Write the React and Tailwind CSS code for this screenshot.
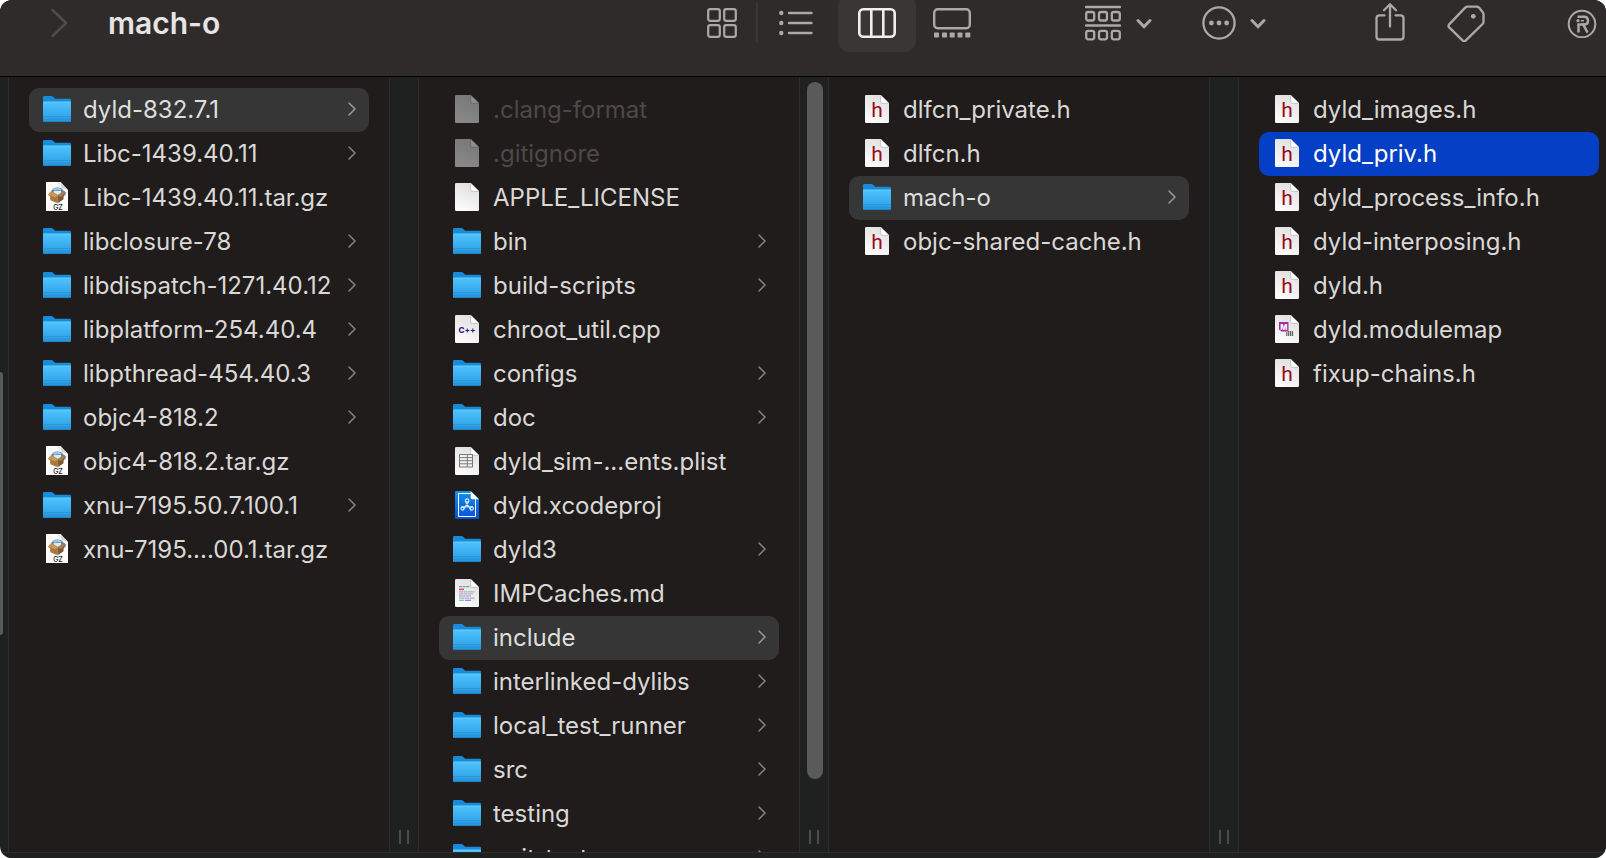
import React from "react";

const FolderIcon = () => (
  <svg width="28" height="32" viewBox="0 0 28 32" className="shrink-0" aria-hidden="true">
    <defs>
      <linearGradient id="folderFront" x1="0" y1="0" x2="0" y2="1">
        <stop offset="0" stopColor="#5fd0fe" />
        <stop offset="0.1" stopColor="#4cbffa" />
        <stop offset="0.7" stopColor="#35a8ec" />
        <stop offset="1" stopColor="#2893d8" />
      </linearGradient>
    </defs>
    <path d="M0 3.2Q0 2 1.2 2H8.4Q9.2 2 9.8 2.5L11.6 4.2Q12.2 4.8 13.2 4.8H26.8Q28 4.8 28 6V12H0Z" fill="#1b8ad8" />
    <path d="M0 8.3Q0 7.6.8 7.6H27.2Q28 7.6 28 8.3V26.8Q28 28 26.8 28H1.2Q0 28 0 26.8Z" fill="url(#folderFront)" />
    <path d="M0 22.5H28M0 25.2H28" stroke="#2389cf" strokeWidth="0.6" />
    <path d="M0.4 27.6H27.6" stroke="#1a79bd" strokeWidth="0.8" />
  </svg>
);

const Page = ({ children, dim }) => (
  <svg width="28" height="32" viewBox="0 0 28 32" className="shrink-0" aria-hidden="true">
    <defs>
      <linearGradient id="pagePaper" x1="0.4" y1="1" x2="0.8" y2="0">
        <stop offset="0" stopColor="#fbfbfb" />
        <stop offset="1" stopColor="#dedede" />
      </linearGradient>
      <linearGradient id="pageDim" x1="0.4" y1="1" x2="0.8" y2="0">
        <stop offset="0" stopColor="#8a8989" />
        <stop offset="1" stopColor="#777676" />
      </linearGradient>
    </defs>
    <path d="M2 2.2Q2 1 3.2 1H17.7L26 9.3V27.8Q26 29 24.8 29H3.2Q2 29 2 27.8Z" fill={dim ? "url(#pageDim)" : "url(#pagePaper)"} />
    <path d="M17.7 1V8Q17.7 9.3 19 9.3H26Z" fill={dim ? "#8f8e8e" : "#ffffff"} />
    <path d="M17.7 1.5V8Q17.7 9.3 19 9.3H25.7" fill="none" stroke={dim ? "#5f5e5e" : "#b5b5b5"} strokeWidth="0.7" />
    {children}
  </svg>
);

const HeaderFileIcon = () => (
  <Page>
    <text x="14" y="23" textAnchor="middle" fontSize="21" fontFamily="Roboto, sans-serif" fill="#980b20">h</text>
  </Page>
);

const CppIcon = () => (
  <Page>
    <text x="14" y="18.5" textAnchor="middle" fontSize="8" fontWeight="800" fontFamily="Inter, sans-serif" fill="#3c1b7c">C++</text>
  </Page>
);

const PlistIcon = () => (
  <Page>
    <rect x="6.5" y="8.5" width="13" height="12.5" fill="#f2f2f2" stroke="#7a7a7a" strokeWidth="1" />
    <path d="M6.5 11.6H19.5M6.5 14.7H19.5M6.5 17.8H19.5M14.3 8.5V21" stroke="#7a7a7a" strokeWidth="1" />
  </Page>
);

const MarkdownIcon = () => (
  <Page>
    <path d="M6 8.7H17" stroke="#5cab9c" strokeWidth="1.3" strokeDasharray="3 0.6" />
    <path d="M6 11.4H11" stroke="#e0407f" strokeWidth="1.5" />
    <path d="M6 13.8H21.5M6 15.8H20" stroke="#a9b0b8" strokeWidth="1.2" strokeDasharray="4 0.4" />
    <path d="M6 18H18" stroke="#9b7fe0" strokeWidth="1.2" strokeDasharray="3 0.4" />
    <path d="M6 20.1H21.5" stroke="#a9b0b8" strokeWidth="1.1" strokeDasharray="5 0.4" />
    <path d="M6 22.3H11" stroke="#7fc4b8" strokeWidth="1.2" />
    <path d="M12 22.3H18" stroke="#7b83e6" strokeWidth="1.2" />
  </Page>
);

const XcodeIcon = () => (
  <svg width="28" height="32" viewBox="0 0 28 32" className="shrink-0" aria-hidden="true">
    <defs>
      <linearGradient id="xcodeBlue" x1="0" y1="0" x2="0" y2="1">
        <stop offset="0" stopColor="#1591e8" />
        <stop offset="1" stopColor="#0a4fdc" />
      </linearGradient>
    </defs>
    <path d="M2 2.2Q2 1 3.2 1H17.7L26 9.3V27.8Q26 29 24.8 29H3.2Q2 29 2 27.8Z" fill="url(#xcodeBlue)" />
    <path d="M18 3.5H5.5V26.5H22.5V9" fill="none" stroke="#fff" strokeWidth="1" />
    <path d="M17.7 1V8Q17.7 9.3 19 9.3H26Z" fill="#f4f7fb" />
    <g fill="none" stroke="#d9edff" strokeWidth="1.1" strokeLinecap="round">
      <path d="M12.4 11.4L18 20.2M15.8 11.4L10.4 19.8M8.6 16.8H19.6" />
      <circle cx="14.1" cy="10.6" r="1.7" />
      <circle cx="9.4" cy="18.6" r="1.5" />
      <circle cx="18.8" cy="18.6" r="1.5" />
    </g>
  </svg>
);

const ModuleIcon = () => (
  <Page>
    <path d="M6 8H15.5V17.5H8.5L6 15.5Z" fill="#a62ba6" />
    <text x="10.8" y="15.5" textAnchor="middle" fontSize="7.5" fontWeight="800" fontFamily="Inter, sans-serif" fill="#fff">M</text>
    <path d="M13.8 18V22M15.7 17V22M17.6 17V22M19.5 17V22" stroke="#5e5e5e" strokeWidth="1.2" />
  </Page>
);

const GzIcon = () => (
  <svg width="28" height="32" viewBox="0 0 28 32" className="shrink-0" aria-hidden="true">
    <path d="M3 0H17.5L25 8V29H3Z" fill="#fdfdfd" />
    <path d="M17.5 0C18.6 3 18.6 4.6 18 6.6C20.5 6.2 23 6.7 25 8Z" fill="#d2d2d2" />
    <path d="M14 0.5H17.5L18 6.6L15.5 4Z" fill="#ececec" />
    <path d="M8.3 9.2Q9.6 5.6 14 5.4Q18.6 5.4 20.4 8.6L19.6 12.5H9.6Z" fill="#4d83ad" />
    <path d="M9.8 7.2Q13.8 4.8 18.6 7.2L17.4 8.4Q13.8 7 10.8 8.6Z" fill="#a9cde4" />
    <path d="M10.6 8.8H18.2L17.8 12.4H11.4Z" fill="#dfe7ec" />
    <path d="M5 12.8L8.2 9L12.2 11.4L15 13.2L14.6 21.2L7.4 18.2L7 14.6Z" fill="#a9783e" />
    <path d="M15 13.2L20.6 10L22.8 12.2L20.8 14L20.4 17.6L14.6 21.2Z" fill="#86592b" />
    <path d="M5 12.8L8.2 9L15 13.2L12.2 15.6Z" fill="#c6985a" />
    <path d="M15 13.2L20.8 8.6L23.4 10.8L17.2 15.2Z" fill="#9a8161" />
    <text x="15" y="28" textAnchor="middle" fontSize="7" fontWeight="500" fontFamily="Inter, sans-serif" fill="#222">GZ</text>
  </svg>
);

const icons = {
  folder: FolderIcon,
  file: () => <Page />,
  hidden: () => <Page dim />,
  h: HeaderFileIcon,
  cpp: CppIcon,
  plist: PlistIcon,
  md: MarkdownIcon,
  xcode: XcodeIcon,
  module: ModuleIcon,
  gz: GzIcon,
};

const columns = [
  [
    ["dyld-832.7.1", "folder", "open"],
    ["Libc-1439.40.11", "folder"],
    ["Libc-1439.40.11.tar.gz", "gz"],
    ["libclosure-78", "folder"],
    ["libdispatch-1271.40.12", "folder"],
    ["libplatform-254.40.4", "folder"],
    ["libpthread-454.40.3", "folder"],
    ["objc4-818.2", "folder"],
    ["objc4-818.2.tar.gz", "gz"],
    ["xnu-7195.50.7.100.1", "folder"],
    ["xnu-7195....00.1.tar.gz", "gz"],
  ],
  [
    [".clang-format", "hidden"],
    [".gitignore", "hidden"],
    ["APPLE_LICENSE", "file"],
    ["bin", "folder"],
    ["build-scripts", "folder"],
    ["chroot_util.cpp", "cpp"],
    ["configs", "folder"],
    ["doc", "folder"],
    ["dyld_sim-...ents.plist", "plist"],
    ["dyld.xcodeproj", "xcode"],
    ["dyld3", "folder"],
    ["IMPCaches.md", "md"],
    ["include", "folder", "open"],
    ["interlinked-dylibs", "folder"],
    ["local_test_runner", "folder"],
    ["src", "folder"],
    ["testing", "folder"],
    ["unit-tests", "folder"],
  ],
  [
    ["dlfcn_private.h", "h"],
    ["dlfcn.h", "h"],
    ["mach-o", "folder", "open"],
    ["objc-shared-cache.h", "h"],
  ],
  [
    ["dyld_images.h", "h"],
    ["dyld_priv.h", "h", "active"],
    ["dyld_process_info.h", "h"],
    ["dyld-interposing.h", "h"],
    ["dyld.h", "h"],
    ["dyld.modulemap", "module"],
    ["fixup-chains.h", "h"],
  ],
];

function Row({ name, kind, state }) {
  const Icon = icons[kind];
  const look =
    state === "active"
      ? "bg-[#053fc5] text-white"
      : state === "open"
        ? "bg-[#363636] text-[#dededd]"
        : kind === "hidden"
          ? "text-[#4c4948]"
          : "text-[#dad8d7]";
  return (
    <li>
      <button type="button" className={`flex h-11 w-full items-center rounded-[10px] pr-[13px] pl-[14px] text-left text-2xl whitespace-nowrap ${look}`}>
        <Icon />
        <span className="ml-3 flex-1">{name}</span>
        {kind === "folder" && (
          <svg width="9" height="16" viewBox="0 0 9 16" className="mb-0.5 shrink-0" fill="none" stroke={state ? "#9a9999" : "#858281"} strokeWidth="1.5" strokeLinecap="round" strokeLinejoin="round" aria-hidden="true">
            <path d="M2 2L8 8L2 14" />
          </svg>
        )}
      </button>
    </li>
  );
}

function Track({ thumb }) {
  return (
    <div className="flex w-[30px] shrink-0 flex-col items-center border-x border-[#2c2d2d] bg-[#1f2020] pt-[5px] pb-2">
      {thumb && <div className="ml-0.5 h-[91.5%] w-4 rounded-full bg-[#5a5a5a]" />}
      <div className="mt-auto flex gap-1.5">
        <div className="h-3.5 w-0.5 bg-[#4c4c4c]" />
        <div className="h-3.5 w-0.5 bg-[#4c4c4c]" />
      </div>
    </div>
  );
}

const DownChevron = () => (
  <svg width="16" height="12" viewBox="0 0 16 12" fill="none" stroke="currentColor" strokeWidth="3" strokeLinecap="round" strokeLinejoin="round" aria-hidden="true">
    <path d="M2 3.5L8 9.8L14 3.5" />
  </svg>
);

function Toolbar() {
  return (
    <header className="h-[77px] shrink-0 border-b border-black bg-[#2f2b2a] text-[#aca8a7]">
      <div className="flex h-[46px] items-center pr-[9px] pl-[51px]">
        <button type="button" aria-label="Forward" className="text-[#504c4b]">
          <svg width="17" height="30" viewBox="0 0 17 30" fill="none" stroke="currentColor" strokeWidth="2.5" strokeLinecap="round" strokeLinejoin="round">
            <path d="M1.5 2L15 15L1.5 28" />
          </svg>
        </button>
        <h1 className="ml-10 flex-1 text-3xl font-semibold text-[#e6e4e4]">mach-o</h1>

        <button type="button" aria-label="Icon view" className="flex w-[68px] justify-center">
          <svg width="30" height="30" viewBox="0 0 30 30" fill="none" stroke="currentColor" strokeWidth="2.2">
            <rect x="1.2" y="1.2" width="11.6" height="11.6" rx="2" />
            <rect x="17.2" y="1.2" width="11.6" height="11.6" rx="2" />
            <rect x="1.2" y="17.2" width="11.6" height="11.6" rx="2" />
            <rect x="17.2" y="17.2" width="11.6" height="11.6" rx="2" />
          </svg>
        </button>
        <div className="h-10 w-0.5 bg-[#3b3736]" />
        <button type="button" aria-label="List view" className="flex w-[76px] justify-center">
          <svg width="34" height="26" viewBox="0 0 34 26" fill="none" stroke="currentColor" strokeWidth="2.4" strokeLinecap="round">
            <path d="M10 3H32.5M10 13H32.5M10 23H32.5" />
            <g fill="currentColor" stroke="none">
              <circle cx="2.3" cy="3" r="2.2" />
              <circle cx="2.3" cy="13" r="2.2" />
              <circle cx="2.3" cy="23" r="2.2" />
            </g>
          </svg>
        </button>
        <button type="button" aria-label="Column view" aria-pressed="true" className="ml-1 flex h-[58px] w-[78px] items-center justify-center rounded-xl bg-[#3a3635] text-[#f0eeee]">
          <svg width="38" height="30" viewBox="0 0 38 30" fill="none" stroke="currentColor" strokeWidth="2.6">
            <rect x="1.3" y="1.3" width="35.4" height="27.4" rx="4" />
            <path d="M13.3 1V29M25.3 1V29" />
          </svg>
        </button>
        <button type="button" aria-label="Gallery view" className="flex w-[72px] justify-center">
          <svg width="38" height="30" viewBox="0 0 38 30" fill="none" stroke="currentColor" strokeWidth="2.4">
            <rect x="1.2" y="1.2" width="35.6" height="19" rx="3.5" />
            <g fill="currentColor" stroke="none">
              <rect x="1" y="24.5" width="5" height="5" rx="0.7" />
              <rect x="9" y="24.5" width="5" height="5" rx="0.7" />
              <rect x="16.7" y="24.5" width="5" height="5" rx="0.7" />
              <rect x="24.5" y="24.5" width="5" height="5" rx="0.7" />
              <rect x="32.3" y="24.5" width="5" height="5" rx="0.7" />
            </g>
          </svg>
        </button>

        <button type="button" aria-label="Group items" className="ml-[97px] flex items-center gap-[15px]">
          <svg width="36" height="36" viewBox="0 0 36 36" fill="none" stroke="currentColor" strokeWidth="2.3">
            <path d="M1 2H35M1 20.5H35" strokeLinecap="round" />
            <rect x="1.2" y="7" width="8" height="8.5" rx="2" />
            <rect x="14" y="7" width="8" height="8.5" rx="2" />
            <rect x="26.8" y="7" width="8" height="8.5" rx="2" />
            <rect x="1.2" y="25.8" width="8" height="8.5" rx="2" />
            <rect x="14" y="25.8" width="8" height="8.5" rx="2" />
            <rect x="26.8" y="25.8" width="8" height="8.5" rx="2" />
          </svg>
          <DownChevron />
        </button>
        <button type="button" aria-label="Actions" className="ml-[50px] flex items-center gap-[14px]">
          <svg width="34" height="34" viewBox="0 0 34 34" fill="none" stroke="currentColor" strokeWidth="2.3">
            <circle cx="17" cy="17" r="15.6" />
            <g fill="currentColor" stroke="none">
              <circle cx="9.4" cy="17" r="2.4" />
              <circle cx="17" cy="17" r="2.4" />
              <circle cx="24.6" cy="17" r="2.4" />
            </g>
          </svg>
          <DownChevron />
        </button>
        <button type="button" aria-label="Share" className="ml-[109px]">
          <svg width="30" height="40" viewBox="0 0 30 40" fill="none" stroke="currentColor" strokeWidth="2.3" strokeLinecap="round" strokeLinejoin="round">
            <path d="M9.5 12.3H4.5Q1.5 12.3 1.5 15.3V33.5Q1.5 36.5 4.5 36.5H25.5Q28.5 36.5 28.5 33.5V15.3Q28.5 12.3 25.5 12.3H20.5" />
            <path d="M15 23.5V1.8M9 7.3L15 1.3L21 7.3" />
          </svg>
        </button>
        <button type="button" aria-label="Edit tags" className="ml-[42px]">
          <svg width="38" height="38" viewBox="0 0 38 38" fill="none" stroke="currentColor" strokeWidth="2.3" strokeLinejoin="round">
            <path d="M20.6 2.6H29.6Q31 2.6 32 3.6L35.6 8Q36.5 9 36.5 10.4V17.6Q36.5 19 35.6 20L18.6 36.6Q17.2 38 15.8 36.6L2.2 23.4Q.8 21.9 2.2 20.4L18.2 3.6Q19.2 2.6 20.6 2.6Z" />
            <circle cx="26.3" cy="12.3" r="2.4" fill="currentColor" stroke="none" />
          </svg>
        </button>
        <button type="button" aria-label="Registered" className="ml-[82px]">
          <svg width="30" height="30" viewBox="0 0 30 30" fill="none" stroke="currentColor" strokeWidth="2">
            <circle cx="15" cy="16" r="13.3" />
            <path d="M10.5 8.8H17Q21 8.8 21 12.7Q21 16.5 17 16.5H16.2L20.6 24.6" strokeWidth="2.5" />
            <path d="M11.5 24.6V16.5H18" strokeWidth="2.5" />
            <path d="M13.8 12.7H17" strokeWidth="1.6" />
            <circle cx="11" cy="12.7" r="1.6" fill="currentColor" stroke="none" />
          </svg>
        </button>
      </div>
    </header>
  );
}

export default function App() {
  return (
    <div className="h-screen overflow-hidden bg-white font-['Inter',sans-serif]">
      <div className="flex h-full flex-col overflow-hidden rounded-xl bg-[#1f2020]">
        <Toolbar />
        <main className="flex min-h-0 flex-1 overflow-hidden">
          <div className="flex w-[9px] shrink-0 flex-col border-r border-[#2c2d2d]">
            <div className="h-[38%]" />
            <div className="h-[34%] w-[3px] rounded-r-full bg-[#5a5a5a]" />
          </div>
          {columns.map((items, i) => {
            const last = i === columns.length - 1;
            return (
              <React.Fragment key={i}>
                <ul className={`overflow-hidden bg-[#201c1b] pt-[11px] pl-5 ${last ? "min-w-0 flex-1 pr-[7px]" : "w-[380px] shrink-0 pr-5"}`}>
                  {items.map(([name, kind, state]) => (
                    <Row key={name} name={name} kind={kind} state={state} />
                  ))}
                </ul>
                {!last && <Track thumb={i === 1} />}
              </React.Fragment>
            );
          })}
        </main>
        <footer className="h-1.5 shrink-0 border-t border-[#2c2d2d] bg-[#1f2020]" />
      </div>
    </div>
  );
}
